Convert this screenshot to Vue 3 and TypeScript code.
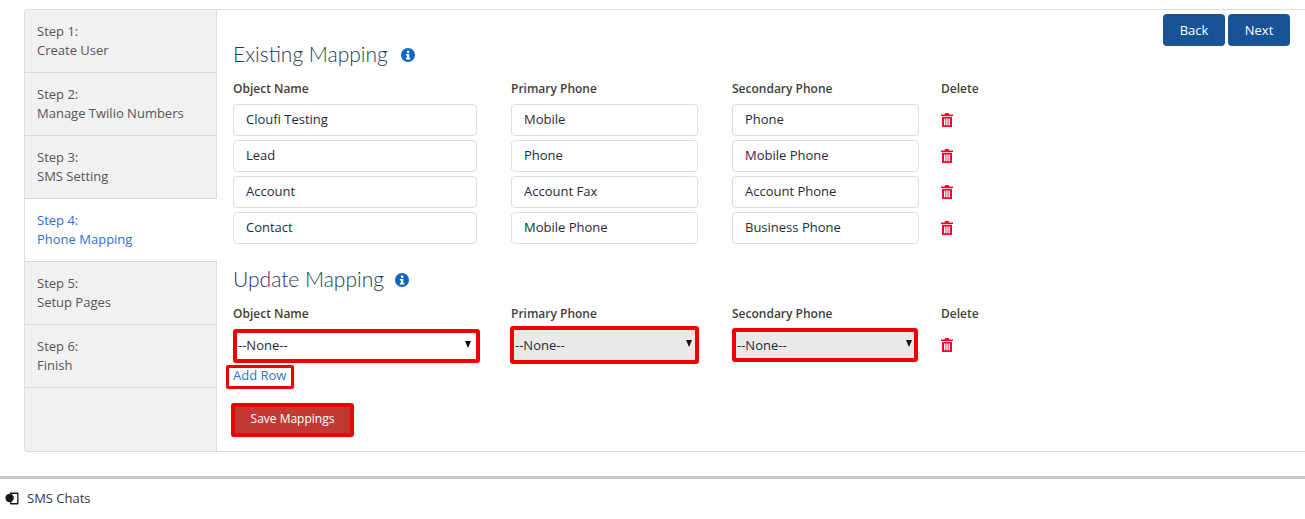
<script setup lang="ts">
interface Mapping { object: string; primary: string; secondary: string }
const steps: { step: string; name: string }[] = [
  { step: 'Step 1:', name: 'Create User' },
  { step: 'Step 2:', name: 'Manage Twilio Numbers' },
  { step: 'Step 3:', name: 'SMS Setting' },
  { step: 'Step 4:', name: 'Phone Mapping' },
  { step: 'Step 5:', name: 'Setup Pages' },
  { step: 'Step 6:', name: 'Finish' },
]
const activeIndex = 3
const mappings: Mapping[] = [
  { object: 'Cloufi Testing', primary: 'Mobile', secondary: 'Phone' },
  { object: 'Lead', primary: 'Phone', secondary: 'Mobile Phone' },
  { object: 'Account', primary: 'Account Fax', secondary: 'Account Phone' },
  { object: 'Contact', primary: 'Mobile Phone', secondary: 'Business Phone' },
]
const columns = ['Object Name', 'Primary Phone', 'Secondary Phone', 'Delete']
</script>

<template>
  <div class="page">
    <div class="card">
      <nav class="side">
        <div
          v-for="(s, i) in steps"
          :key="s.step"
          class="step"
          :class="{ active: i === activeIndex }"
        >
          <div>{{ s.step }}</div>
          <div>{{ s.name }}</div>
        </div>
      </nav>
      <main class="main">
        <div class="top">
          <h2 class="title first">
            Existing Mapping
            <svg class="info wide" viewBox="0 0 14 14"><circle cx="7" cy="7" r="7" fill="#0b67c4"/><rect x="5.9" y="2.6" width="2.4" height="2.3" rx=".6" fill="#fff"/><path d="M4.9 6h3.4v4h1v1.4H4.9V10h1V7.4h-1z" fill="#fff"/></svg>
          </h2>
          <div class="nav-btns">
            <button class="btn">Back</button>
            <button class="btn">Next</button>
          </div>
        </div>
        <div class="grid head">
          <div v-for="c in columns" :key="c" class="label">{{ c }}</div>
        </div>
        <div v-for="m in mappings" :key="m.object" class="grid row">
          <div class="input">{{ m.object }}</div>
          <div class="input">{{ m.primary }}</div>
          <div class="input">{{ m.secondary }}</div>
          <svg class="trash" viewBox="0 0 12 14"><path d="M4.2 0h3.6l.6 1.4H12v1.5H0V1.4h3.6zM1 3.8h10V14H1zM3 5.4v6.9h1.5V5.4zM5.3 5.4v6.9h1.4V5.4zM7.5 5.4v6.9H9V5.4z" fill="#ee0a2e" fill-rule="evenodd"/></svg>
        </div>
        <h2 class="title second">
          Update Mapping
          <svg class="info" viewBox="0 0 14 14"><circle cx="7" cy="7" r="7" fill="#0b67c4"/><rect x="5.9" y="2.6" width="2.4" height="2.3" rx=".6" fill="#fff"/><path d="M4.9 6h3.4v4h1v1.4H4.9V10h1V7.4h-1z" fill="#fff"/></svg>
        </h2>
        <div class="grid head head2">
          <div v-for="c in columns" :key="c" class="label">{{ c }}</div>
        </div>
        <div class="selects">
          <div class="select s1">--None--<span class="arrow"></span></div>
          <div class="select s2 off">--None--<span class="arrow"></span></div>
          <div class="select s3 off">--None--<span class="arrow"></span></div>
          <svg class="trash" viewBox="0 0 12 14"><path d="M4.2 0h3.6l.6 1.4H12v1.5H0V1.4h3.6zM1 3.8h10V14H1zM3 5.4v6.9h1.5V5.4zM5.3 5.4v6.9h1.4V5.4zM7.5 5.4v6.9H9V5.4z" fill="#ee0a2e" fill-rule="evenodd"/></svg>
        </div>
        <a class="add">Add Row</a>
        <button class="save">Save Mappings</button>
      </main>
    </div>
    <footer class="foot">
      <svg class="foot-icon" viewBox="0 0 14 13"><path d="M5 .5h7.5a1 1 0 0 1 1 1v10a1 1 0 0 1-1 1H6a1 1 0 0 1-1-1V10h1.3v1h5.9V2H6.3v.8H5z" fill="#16181a"/><circle cx="4.6" cy="6" r="4.2" fill="#16181a"/></svg>
      <span>SMS Chats</span>
    </footer>
  </div>
</template>

<style>
html, body { margin: 0; background: #fff; overflow: hidden; }
</style>

<style scoped>
.page {
  width: 1305px;
  height: 519px;
  padding-top: 9px;
  box-sizing: border-box;
  font-family: "Open Sans", "Liberation Sans", sans-serif;
  font-size: 13px;
  color: #16325c;
}
.card {
  margin-left: 24px;
  height: 443px;
  box-sizing: border-box;
  display: flex;
  border: 1px solid #dcdcdc;
  border-right: 0;
  border-radius: 4px 0 0 4px;
}
.side {
  width: 191px;
  flex: none;
  box-sizing: content-box;
  background: #f1f1f1;
  border-right: 1px solid #dcdcdc;
  border-radius: 4px 0 0 4px;
}
.step {
  height: 62px;
  box-sizing: content-box;
  border-bottom: 1px solid #d8d8d8;
  padding: 0 0 0 12px;
  display: flex;
  flex-direction: column;
  justify-content: center;
  gap: 0;
  line-height: 19px;
  color: #54565a;
}
.step.active {
  background: #fff;
  color: #2a6fd0;
  margin-right: -1px;
  position: relative;
}
.main {
  flex: 1;
  min-width: 0;
  padding: 4px 15px 0 16px;
}
.top {
  display: flex;
  justify-content: space-between;
  align-items: flex-start;
}
.title {
  margin: 0;
  font-family: "Lato", "Open Sans", sans-serif;
  font-weight: 300;
  font-size: 21px;
  line-height: 28px;
  color: #1d3a5c;
  display: flex;
  align-items: center;
}
.title.first { padding-top: 26px; }
.info { width: 14px; height: 14px; margin-left: 11px; margin-top: 1px; }
.info.wide { margin-left: 13px; }
.nav-btns { display: flex; gap: 3px; }
.btn {
  width: 62px;
  height: 32px;
  border: 0;
  border-radius: 4px;
  background: #1a5296;
  color: #fff;
  font: inherit;
  padding: 0;
}
.grid {
  display: grid;
  grid-template-columns: 244px 187px 187px auto;
  column-gap: 34px;
  justify-content: start;
  align-items: center;
}
.grid > :last-child { margin-left: -12px; }
.head { margin-top: 11px; height: 19px; margin-bottom: 6px; }
.head2 { margin-top: 11px; margin-bottom: 0; }
.label {
  font-weight: 600;
  font-size: 12px;
  color: #3e3e3c;
  white-space: nowrap;
}
.row { height: 32px; margin-bottom: 4px; }
.input {
  height: 32px;
  box-sizing: border-box;
  border: 1px solid #d8dde6;
  border-radius: 4px;
  padding: 0 12px;
  line-height: 29px;
  color: #1c2b40;
}
.trash { width: 12px; height: 14px; display: block; }
.title.second { margin-top: 21px; }
.selects { position: relative; display: flex; align-items: center; height: 38px; margin-top: 3px; }
.selects .trash { margin-left: 23px; }
.select {
  position: relative;
  box-sizing: border-box;
  border: 4px solid #f10000;
  border-radius: 3px;
  padding-left: 1px;
  color: #1c2b40;
  display: flex;
  align-items: center;
}
.s1 { width: 247px; height: 34px; margin-right: 30px; margin-top: 2px; padding-bottom: 2px; }
.s2 { width: 189px; height: 38px; margin-right: 33px; }
.s3 { width: 186px; height: 34px; }
.off { background: #ebe9e7; }
.arrow {
  position: absolute;
  right: 5px;
  top: 50%;
  margin-top: -5px;
  width: 0;
  height: 0;
  border-left: 3.5px solid transparent;
  border-right: 3.5px solid transparent;
  border-top: 7px solid #111;
}
.s2 .arrow { right: 3.5px; }
.s3 .arrow { right: 2px; }
.add {
  display: block;
  width: fit-content;
  box-sizing: border-box;
  margin: 1px 0 0 -7px;
  padding: 0 5px 0 4px;
  height: 24px;
  line-height: 15px;
  border: 3px solid #f10000;
  border-radius: 2px;
  color: #2a6fd0;
}
.save {
  display: block;
  margin: 14px 0 0 -2px;
  width: 123px;
  height: 34px;
  box-sizing: border-box;
  border: 4px solid #f10000;
  border-radius: 3px;
  background: #c23934;
  color: #fff;
  font: inherit;
  font-size: 12px;
  font-weight: 500;
  padding: 0 0 3px;
}
.foot {
  margin-top: 24px;
  border-top: 3px solid #c9c9c9;
  display: flex;
  align-items: center;
  gap: 8px;
  padding: 10px 0 0 5px;
  line-height: 18px;
  color: #2b3a4f;
}
.foot-icon { width: 14px; height: 13px; }
</style>
